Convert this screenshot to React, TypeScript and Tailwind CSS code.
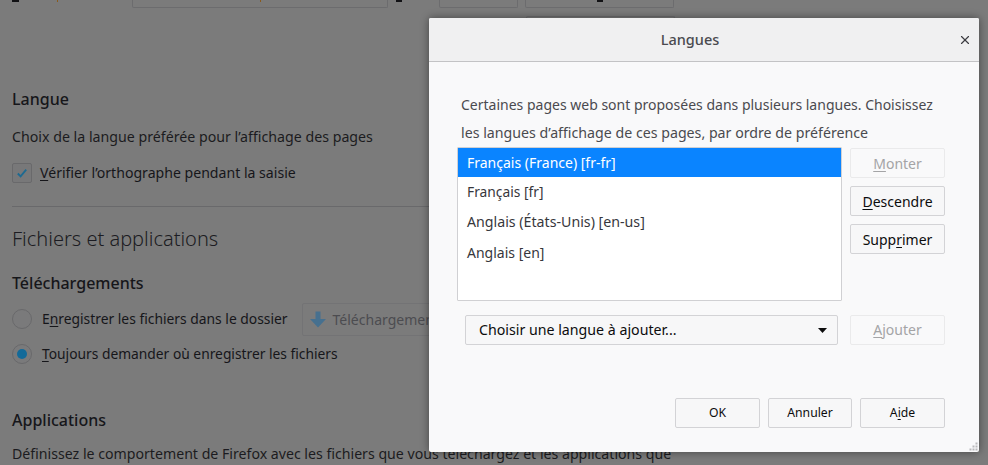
import React from "react";
import { X } from "lucide-react";

function Btn({ children, className = "", disabled = false }: { children: React.ReactNode; className?: string; disabled?: boolean }) {
  return (
    <div className={`h-[30px] flex items-center justify-center rounded-[2px] border ${disabled ? "border-[#eaeaeb] bg-[#f9f9fa] text-[#a4a4a6]" : "border-[#d3d3d6] bg-[#f7f7f8] text-[#0c0c0d]"} ${className}`}>
      <span>{children}</span>
    </div>
  );
}

function U({ children }: { children: React.ReactNode }) {
  return <span className="underline underline-offset-2 decoration-1">{children}</span>;
}

function TopBox({ className, children }: { className: string; children?: React.ReactNode }) {
  return <div className={`flex h-[8px] justify-center rounded-b-[2px] border border-t-0 border-[#6c6c6e] ${className}`}>{children}</div>;
}

export default function App() {
  return (
    <div className="relative h-[465px] w-[988px] overflow-hidden bg-[#7b7b7b] font-['Noto_Sans',sans-serif] text-[14px] text-[#16161a]">
      {/* Page behind the dialog */}
      <div className="h-[465px]">
        <div className="flex h-[8px] items-start">
          <div className="ml-[12px] h-[2px] w-[7px] bg-[#111114]" />
          <div className="ml-[38px] h-[2px] w-px bg-[#8a5a1c]" />
          <TopBox className="ml-[74px] w-[256px]">
            <div className="h-[2px] w-px bg-[#8a5a1c]" />
          </TopBox>
          <div className="ml-[8px] h-[2px] w-[6px] bg-[#111114]" />
          <TopBox className="ml-[37px] w-[79px]" />
          <TopBox className="ml-[7px] w-[149px]">
            <div className="h-[2px] w-[6px] bg-[#111114]" />
          </TopBox>
        </div>
        <div className="ml-[526px] mt-[8px] h-[3px] w-[149px] rounded-t-[2px] border border-b-0 border-[#6c6c6e]" />
        <div className="pl-[12px]">
          <div className="mt-[69px] h-[22px] text-[16px] font-medium leading-[22px]">Langue</div>
          <div className="mt-[17px] h-[20px] whitespace-nowrap text-[14.2px] leading-[20px] text-[#1b1b20]">Choix de la langue préférée pour l’affichage des pages</div>
          <div className="mt-[16px] flex h-[20px] items-center">
            <div className="flex h-[20px] w-[20px] items-center justify-center rounded-[2px] border border-[#69696b] bg-[#787879]">
              <svg width="12" height="12" viewBox="0 0 12 12" fill="none"><path d="M1.8 6.5 4.6 9.4 10.2 2.6" stroke="#1d6a91" strokeWidth="1.8" /></svg>
            </div>
            <span className="ml-[8px] text-[14.1px]"><U>V</U>érifier l’orthographe pendant la saisie</span>
          </div>
          <div className="mt-[23px] h-px w-[417px] bg-[#69696b]" />
          <div className="mt-[18px] h-[28px] text-[20px] font-light leading-[28px] text-[#1c1c22]">Fichiers et applications</div>
          <div className="mt-[19px] h-[22px] text-[16px] font-medium leading-[22px]">Téléchargements</div>
          <div className="mt-[8px] flex h-[34px] items-center">
            <div className="h-[20px] w-[20px] rounded-full border border-[#69696b] bg-[#7a7a7b]" />
            <span className="ml-[10px] whitespace-nowrap text-[13.85px]">E<U>n</U>registrer les fichiers dans le dossier</span>
            <div className="ml-[14px] flex h-[33px] w-[130px] items-center rounded-[2px] border border-[#737375] pl-[7px] text-[#4c4c50]">
              <svg width="16" height="17" viewBox="0 0 16 17" className="shrink-0"><path d="M5.5 0.5h5V8H16L8 16.5 0 8h5.5z" fill="#46708f" /></svg>
              <span className="ml-[7px] whitespace-nowrap">Téléchargements</span>
            </div>
          </div>
          <div className="mt-[3px] flex h-[30px] items-center">
            <div className="flex h-[20px] w-[20px] items-center justify-center rounded-full border border-[#69696b] bg-[#7a7a7b]">
              <div className="h-[10px] w-[10px] rounded-full bg-[#136a99]" />
            </div>
            <span className="ml-[10px] text-[13.8px]"><U>T</U>oujours demander où enregistrer les fichiers</span>
          </div>
          <div className="mt-[40px] h-[22px] text-[16px] font-medium leading-[22px]">Applications</div>
          <div className="mt-[13px] whitespace-nowrap text-[14.15px] leading-[20px] text-[#1b1b20]">Définissez le comportement de Firefox avec les fichiers que vous téléchargez et les applications que</div>
        </div>
      </div>

      {/* Modal dialog */}
      <div className="absolute left-[429px] top-[18px] flex h-[434px] w-[550px] flex-col rounded-[2px] bg-[#f9f9fa] shadow-[0_0_8px_rgba(0,0,0,0.45)]">
        <div className="relative flex h-[44px] shrink-0 items-center justify-center rounded-t-[2px] border-b border-[#c3c3c5] bg-[#f0f0f1] pr-[28px] text-[14.5px] font-medium text-[#4a4a4f]">
          Langues
          <X className="absolute right-[7px] top-[15px] text-[#3c3c42]" size={14} strokeWidth={2} />
        </div>
        <div className="flex flex-1 flex-col pl-[28px] pr-[34px]">
          <div className="pl-[4px] pt-[29px] leading-[28px] text-[#4a4a4f]">
            <div className="h-[28px] whitespace-nowrap text-[14px]">Certaines pages web sont proposées dans plusieurs langues. Choisissez</div>
            <div className="h-[28px] whitespace-nowrap text-[14.2px]">les langues d’affichage de ces pages, par ordre de préférence</div>
          </div>
          <div className="flex">
            <div className="h-[154px] w-[385px] rounded-[1px] border border-[#d0d0d3] bg-white text-[#37373c]">
              <div className="flex h-[29px] items-center bg-[#0a84ff] pl-[9px] text-white">Français (France) [fr-fr]</div>
              <div className="flex h-[30px] items-center pl-[9px] text-[13.8px]">Français [fr]</div>
              <div className="flex h-[30px] items-center pl-[9px] text-[14.2px]">Anglais (États-Unis) [en-us]</div>
              <div className="flex h-[30px] items-center pl-[9px]">Anglais [en]</div>
            </div>
            <div className="ml-[8px] flex w-[95px] flex-col gap-[8px] pt-px">
              <Btn disabled><U>M</U>onter</Btn>
              <Btn><U>D</U>escendre</Btn>
              <Btn>Supp<U>r</U>imer</Btn>
            </div>
          </div>
          <div className="ml-[8px] mt-[14px] flex items-center">
            <div className="flex h-[30px] w-[373px] items-center justify-between rounded-[2px] border border-[#d3d3d6] bg-[#f7f7f8] pl-[13px] pr-[10px] text-[14.2px] text-[#0c0c0d]">
              <span>Choisir une langue à ajouter...</span>
              <svg width="9" height="5" viewBox="0 0 9 5"><path d="M0 0h9L4.5 5z" fill="#0c0c0d" /></svg>
            </div>
            <Btn disabled className="ml-[12px] w-[95px] pb-[2px]"><U>A</U>jouter</Btn>
          </div>
          <div className="mt-[53px] flex justify-end gap-[8px] text-[12.2px]">
            <Btn className="w-[85px]">OK</Btn>
            <Btn className="w-[84px]">Annuler</Btn>
            <Btn className="w-[85px]">A<U>i</U>de</Btn>
          </div>
        </div>
        <svg className="absolute bottom-[1px] right-[1px]" width="9" height="9" viewBox="0 0 9 9" fill="#b9b9bb">
          <rect x="6.5" y="0.5" width="2" height="2" /><rect x="3.5" y="3.5" width="2" height="2" /><rect x="6.5" y="3.5" width="2" height="2" /><rect x="0.5" y="6.5" width="2" height="2" /><rect x="3.5" y="6.5" width="2" height="2" /><rect x="6.5" y="6.5" width="2" height="2" />
        </svg>
      </div>
    </div>
  );
}
